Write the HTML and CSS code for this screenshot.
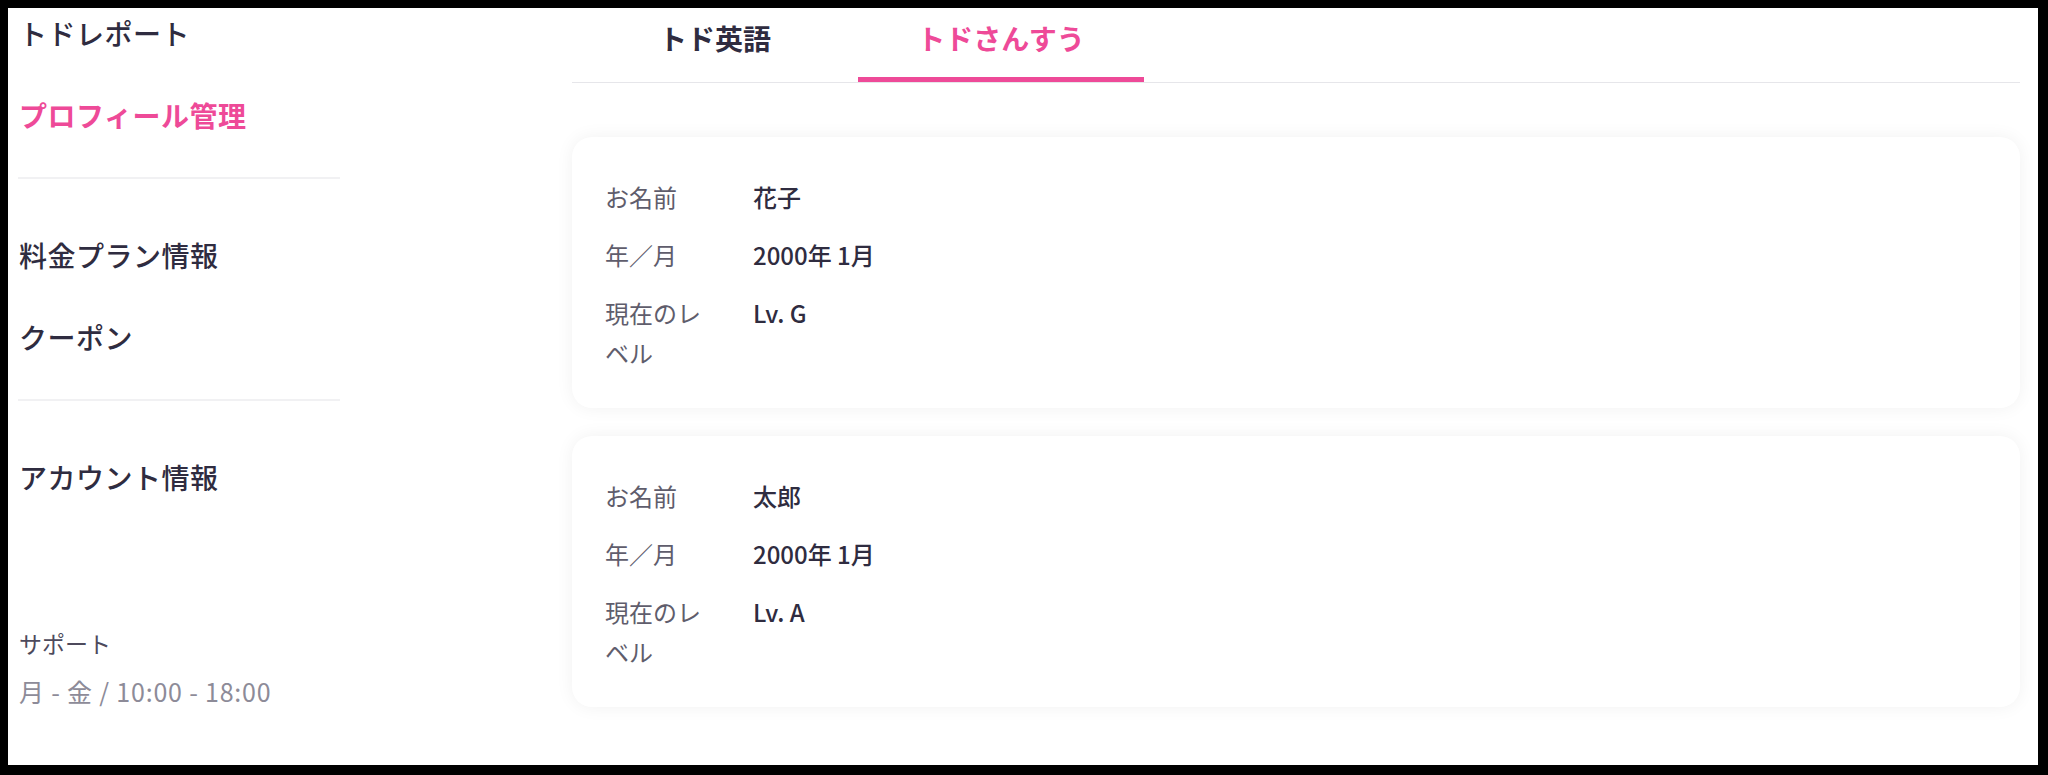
FILE: index.html
```html
<!DOCTYPE html>
<html lang="ja">
<head>
<meta charset="utf-8">
<title>プロフィール管理</title>
<link rel="stylesheet" href="styles.css">
</head>
<body>
<div class="frame">
  <aside class="sidebar">
    <nav class="nav">
      <a class="nav-item">トドレポート</a>
      <a class="nav-item active">プロフィール管理</a>
      <div class="divider"></div>
      <a class="nav-item first-in-group">料金プラン情報</a>
      <a class="nav-item">クーポン</a>
      <div class="divider"></div>
      <a class="nav-item first-in-group">アカウント情報</a>
    </nav>
    <div class="support">
      <div class="support-title">サポート</div>
      <div class="support-hours">月 - 金 / 10:00 - 18:00</div>
    </div>
  </aside>
  <main class="main">
    <div class="tabs">
      <div class="tab">トド英語</div>
      <div class="tab selected">トドさんすう</div>
    </div>
    <section class="cards">
      <div class="card">
        <dl class="info">
          <dt>お名前</dt><dd>花子</dd>
          <dt>年／月</dt><dd>2000年 1月</dd>
          <dt>現在のレベル</dt><dd>Lv. G</dd>
        </dl>
      </div>
      <div class="card">
        <dl class="info">
          <dt>お名前</dt><dd>太郎</dd>
          <dt>年／月</dt><dd>2000年 1月</dd>
          <dt>現在のレベル</dt><dd>Lv. A</dd>
        </dl>
      </div>
    </section>
  </main>
</div>
</body>
</html>
```

FILE: styles.css
```css
* { box-sizing: border-box; }

html, body {
  margin: 0;
  height: 775px;
  overflow: hidden;
}

body {
  background: #000;
  padding: 8px 10px 10px 8px;
  font-family: "Noto Sans CJK JP", "Noto Sans", sans-serif;
  color: #2f2c40;
}

.frame {
  background: #fff;
  height: 757px;
  display: flex;
  padding: 0 18px 0 10px;
}

.sidebar {
  width: 322px;
  flex: none;
  padding-top: 5px;
  display: flex;
  flex-direction: column;
}

.nav {
  display: flex;
  flex-direction: column;
}

.nav-item {
  font-size: 28px;
  line-height: 40px;
  font-weight: 500;
  color: #2f2c40;
  padding-left: 1px;
  margin-bottom: 42px;
  letter-spacing: 0.5px;
}

.nav-item.active {
  color: #ee4a98;
  font-weight: 700;
}

.nav-item.first-in-group {
  margin-top: 56px;
}

.nav-item:last-child {
  margin-bottom: 0;
}

.divider {
  height: 2px;
  background: #f1f1f3;
}

.support {
  margin-top: 129px;
  padding-left: 1px;
}

.support-title {
  font-size: 23px;
  line-height: 34px;
  color: #4d4a5c;
}

.support-hours {
  margin-top: 14px;
  font-size: 25px;
  line-height: 34px;
  color: #8d8b98;
  letter-spacing: 0.8px;
}

.main {
  margin-left: 232px;
  flex: 1;
  display: flex;
  flex-direction: column;
}

.tabs {
  display: flex;
  border-bottom: 1px solid #e6e6ea;
}

.tab {
  width: 286px;
  text-align: center;
  font-size: 28px;
  line-height: 36px;
  font-weight: 700;
  color: #2f2c40;
  padding: 12px 0 21px;
  border-bottom: 5px solid transparent;
}

.tab.selected {
  color: #ee4a98;
  border-bottom-color: #ee4a98;
}

.cards {
  margin-top: 54px;
  display: flex;
  flex-direction: column;
  gap: 28px;
}

.card {
  background: #fff;
  border-radius: 20px;
  box-shadow: 0 0 18px rgba(0, 0, 0, 0.06);
  padding: 40px 32px 35px 33px;
}

.info {
  margin: 0;
  display: grid;
  grid-template-columns: 100px 1fr;
  column-gap: 48px;
  row-gap: 18px;
  font-size: 24px;
  line-height: 40px;
}

.info dt {
  color: #5f5d6c;
}

.info dd {
  margin: 0;
  color: #2f2c40;
  font-weight: 500;
}
```
